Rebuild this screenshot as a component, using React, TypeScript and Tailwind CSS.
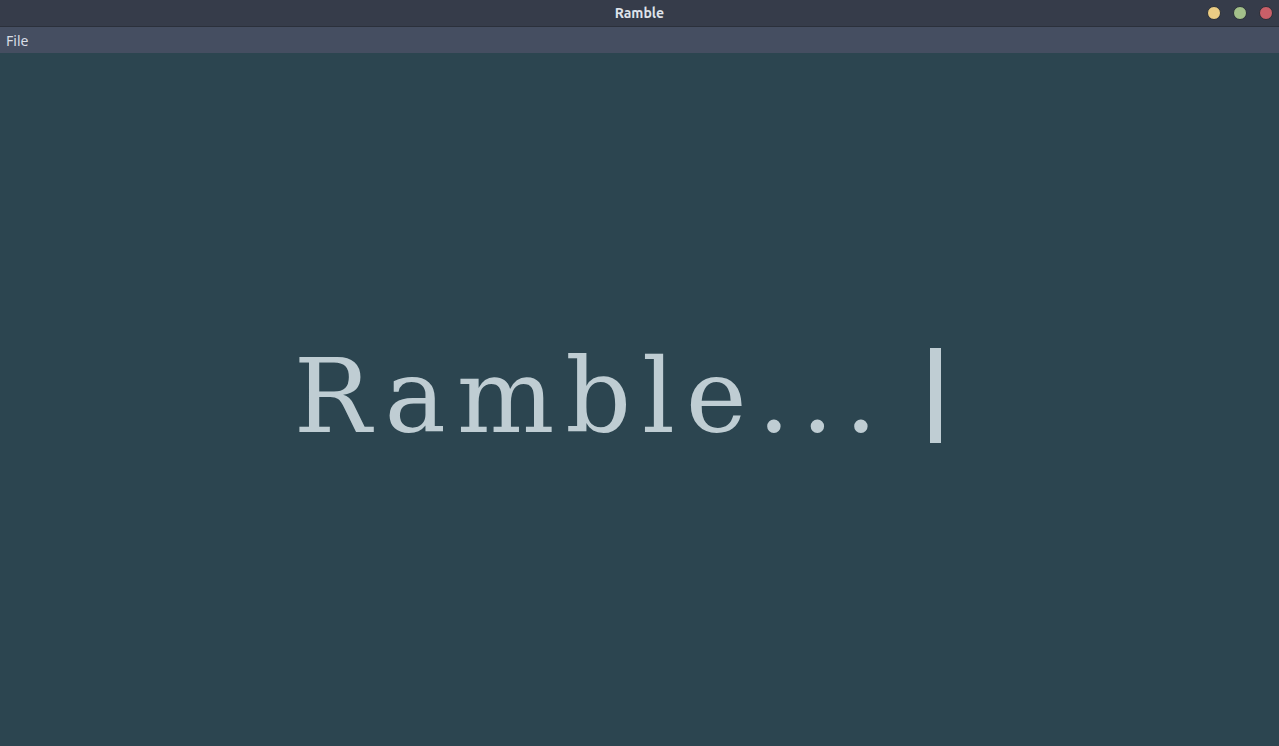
export default function App() {
  return (
    <div className="flex h-[746px] w-[1279px] flex-col overflow-hidden bg-[#2c4550]">
      {/* title bar */}
      <div className="relative flex h-[27px] shrink-0 items-center justify-center border-b border-[#2b303b] bg-[#363c4a]">
        <span className="font-['Ubuntu','Noto_Sans',sans-serif] text-[14px] font-bold text-[#dfe3ea]">Ramble</span>
        <div className="absolute right-[6px] top-[6px] flex gap-[12px]">
          <span className="h-[14px] w-[14px] rounded-full border border-[#2a2f38] bg-[#eccd84]" />
          <span className="h-[14px] w-[14px] rounded-full border border-[#2a2f38] bg-[#a3c08a]" />
          <span className="h-[14px] w-[14px] rounded-full border border-[#2a2f38] bg-[#c95f68]" />
        </div>
      </div>
      {/* menu bar */}
      <div className="flex h-[26px] shrink-0 items-center bg-[#454e61] px-[6px]">
        <span className="font-['Noto_Sans',sans-serif] text-[14px] text-[#d8dde5]">File</span>
      </div>
      {/* editor */}
      <main className="flex flex-1 items-center justify-center pb-[6px] pr-[44px]">
        <div className="flex items-end font-['DejaVu_Serif',serif] text-[103px] leading-none tracking-[0.105em] text-[#bfcdd3]">
          <span>Ramble...</span>
          <span className="mb-[5px] ml-[42px] h-[95px] w-[11px] bg-[#bfcdd3]" />
        </div>
      </main>
    </div>
  );
}
